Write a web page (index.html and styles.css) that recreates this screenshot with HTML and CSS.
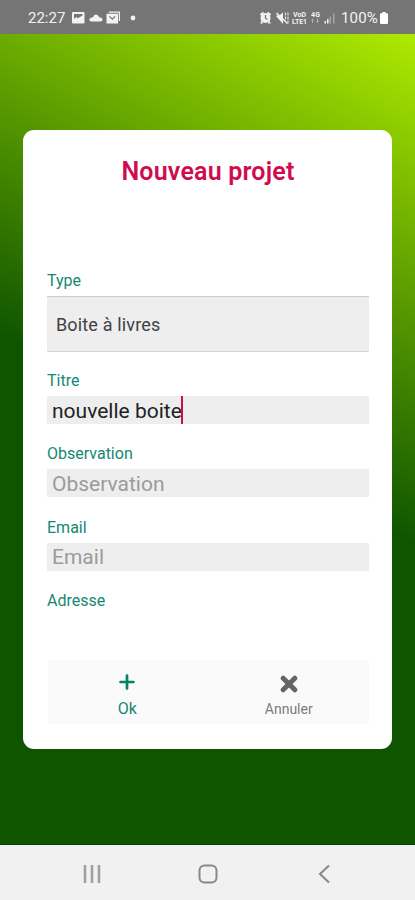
FILE: index.html
```html
<!DOCTYPE html>
<html lang="fr">
<head>
    <meta charset="UTF-8">
    <meta name="viewport" content="width=device-width, initial-scale=1">
    <title>Nouveau projet</title>
    <link rel="stylesheet" href="styles.css">
</head>
<body>
    <!-- Barre d'état -->
    <header class="status-bar">
        <span class="time">22:27</span>
        <svg class="status-icons" width="70" height="16" viewBox="0 0 70 16" fill="#f2f2f2">
            <path fill-rule="evenodd" d="M2 2h10.500a1 1 0 0 1 1 1v9.500a1 1 0 0 1-1 1H2a1 1 0 0 1-1-1V3a1 1 0 0 1 1-1zM3 4v5l2.200-2 1.600 1.300L11.500 5.500V4z"/>
            <path d="M20.500 11.500a1.900 1.900 0 0 1-.5-3.800l2.300-.7C23 5.200 23.800 4.500 25 4.500s2.500 1 3 2.700c2.300 0 3.500 1.200 3.500 2.600 0 1.100-.8 1.700-1.700 1.700z"/>
            <path d="M38 1.500h11v9.500h-1.200V2.700H38z"/>
            <path fill-rule="evenodd" d="M35.500 3.800H47v9.700H35.500zM38 6.800l3.300 3.200 3.300-3.200-.9-.8-2.400 2.200L38.900 6z"/>
            <circle cx="62" cy="8" r="2.400"/>
        </svg>
        <svg class="status-icons right" width="78" height="16" viewBox="0 0 78 16" fill="#f2f2f2">
            <path d="M.8 4.300L4 1.800l1 1.500L2 5.700zM12.200 4.300L9 1.800 8 3.300l3 2.400z"/>
            <circle cx="6.500" cy="8" r="5"/>
            <path d="M2.500 10.500l-1.300 3h3zM10.500 10.500l1.300 3h-3z"/>
            <path d="M6.500 5v3.200l2 1.300" fill="none" stroke="#757575" stroke-width="1.200"/>
            <path d="M17.500 5.500h2.800L24 2.500v11.500L17 6z"/>
            <path d="M17.500 3L28.500 13.500" fill="none" stroke="#f2f2f2" stroke-width="1.500"/>
            <path d="M26.500 2.500v3M29 2.500v3M26.500 6.500v3M29 6.500v3M29 10.500v3" fill="none" stroke="#e0e0e0" stroke-width="1.200"/>
            <text class="network" x="34" y="7" textLength="13">VoD</text>
            <text class="network" x="33" y="13.500" textLength="15">LTE1</text>
            <text class="network" x="52" y="7" textLength="9">4G</text>
            <path d="M53.500 8.500l-1.500 2h1v2.500h1v-2.500h1zM58.500 13L57 11h1V8.500h1V11h1z" opacity=".5"/>
            <path d="M65.500 11H67v2.500h-1.500zM68 9h1.500v4.500H68z"/>
            <path d="M70.500 6.500H72v7h-1.500zM74 3.500h1.500v10H74z" opacity=".4"/>
        </svg>
        <span class="battery-level">100%</span>
        <svg class="battery" width="8" height="12" viewBox="0 0 8 12">
            <path fill="#fff" d="M2.500 0h3v1.200H7a1 1 0 0 1 1 1V11a1 1 0 0 1-1 1H1a1 1 0 0 1-1-1V2.200a1 1 0 0 1 1-1h1.500z"/>
        </svg>
    </header>

    <main class="screen">
        <!-- Formulaire du projet -->
        <form class="card">
            <h1>Nouveau projet</h1>

            <div class="form-item type">
                <label>Type</label>
                <div class="select"><span>Boite à livres</span></div>
            </div>
            <div class="form-item titre">
                <label>Titre</label>
                <div class="field"><span class="value">nouvelle boite</span><span class="cursor"></span></div>
            </div>
            <div class="form-item observation">
                <label>Observation</label>
                <div class="field placeholder"><span>Observation</span></div>
            </div>
            <div class="form-item email">
                <label>Email</label>
                <div class="field placeholder"><span>Email</span></div>
            </div>
            <div class="form-item adresse">
                <label>Adresse</label>
            </div>

            <div class="actions">
                <div class="action ok">
                    <svg width="16" height="16" viewBox="0 0 16 16">
                        <path d="M8 1.500v13M1.500 8h13" fill="none" stroke="#07806c" stroke-width="2.700" stroke-linecap="round"/>
                    </svg>
                    <span>Ok</span>
                </div>
                <div class="action cancel">
                    <svg width="18" height="18" viewBox="0 0 18 18">
                        <path d="M3.200 3.200l11.600 11.600M14.800 3.200L3.200 14.800" fill="none" stroke="#656565" stroke-width="5" stroke-linecap="round"/>
                    </svg>
                    <span>Annuler</span>
                </div>
            </div>
        </form>
    </main>

    <!-- Navigation Android -->
    <nav class="nav-bar">
        <svg width="20" height="20" viewBox="0 0 20 20" fill="none" stroke="#a0a0a0" stroke-width="2.600">
            <path d="M3 1v18M10 1v18M17 1v18"/>
        </svg>
        <svg width="20" height="20" viewBox="0 0 20 20" fill="none" stroke="#878787" stroke-width="2">
            <rect x="1.500" y="1.500" width="17" height="17" rx="5"/>
        </svg>
        <svg width="20" height="20" viewBox="0 0 20 20" fill="none" stroke="#878787" stroke-width="2">
            <path d="M16 1.500L7 10l9 8.500"/>
        </svg>
    </nav>
</body>
</html>
```
FILE: styles.css
```css
* {
    box-sizing: border-box;
}
body {
    margin: 0;
    height: 900px;
    display: flex;
    flex-direction: column;
    font-family: Roboto, "Liberation Sans", sans-serif;
    overflow: hidden;
}
svg {
    display: block;
    flex: none;
}

/* Barre d'état */
.status-bar {
    height: 34px;
    padding: 1px 27px 0 28px;
    display: flex;
    align-items: center;
    background-color: #757575;
    color: #f2f2f2;
    font-size: 15px;
    white-space: nowrap;
}
.time {
    width: 43px;
}
.right {
    margin-left: auto;
    margin-right: 4px;
}
.network {
    font-size: 7px;
    font-weight: 700;
}
.battery-level {
    margin-right: 2px;
    letter-spacing: 0.2px;
}

.screen {
    height: 811px;
    padding: 96px 23px 0;
    background: linear-gradient(206.8deg, #aeea00, #0f5500 50%);
    border-bottom: 1px solid #0b4103;
}
.card {
    height: 619px;
    padding: 25px 23px 0 24px;
    display: flex;
    flex-direction: column;
    background-color: #fff;
    border-radius: 11px;
}
h1 {
    margin: 0 0 82px;
    line-height: 34px;
    text-align: center;
    font-size: 25px;
    font-weight: 600;
    letter-spacing: 0.2px;
    color: #d00c50;
}

/* Champs */
.form-item {
    height: 73.3px;
}
.type {
    height: 100px;
}
label {
    display: block;
    height: 25px;
    line-height: 20px;
    font-size: 16px;
    color: #158872;
}
.select {
    height: 56px;
    padding-left: 9px;
    display: flex;
    align-items: center;
    background-color: #eee;
    border-top: 1px solid #ccc;
    border-bottom: 1px solid #d6d6d6;
    font-size: 18px;
    letter-spacing: 0.15px;
    color: #414141;
}
.field {
    height: 28px;
    padding: 1px 0 0 5px;
    display: flex;
    align-items: center;
    background-color: #eee;
    font-size: 21px;
    color: #222;
}
.placeholder {
    color: #9b9b9b;
}
.cursor {
    width: 2px;
    height: 28px;
    margin-top: -1px;
    margin-left: -1px;
    background-color: #d00c50;
}

/* Boutons */
.actions {
    height: 64px;
    margin-top: -4px;
    margin-left: 1px;
    display: flex;
    background-color: #fafafa;
}
.action {
    flex: 1;
    display: flex;
    flex-direction: column;
    align-items: center;
}
.ok {
    padding: 14px 3px 0 0;
    font-size: 16px;
    line-height: 20px;
    color: #158872;
}
.ok span {
    margin-top: 9px;
}
.cancel {
    padding: 15px 1px 0 0;
    font-size: 14px;
    line-height: 18px;
    color: #7c7c7c;
}
.cancel span {
    margin-top: 7px;
}

.nav-bar {
    height: 55px;
    padding: 3px 82px 0;
    display: flex;
    align-items: center;
    justify-content: space-between;
    background-color: #f1f1f1;
}
```
